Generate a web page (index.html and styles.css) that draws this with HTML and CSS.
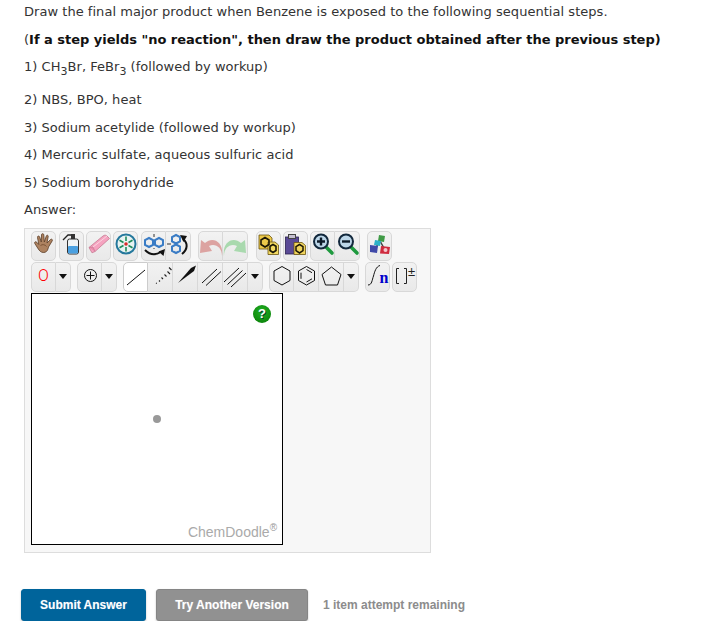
FILE: index.html
```html
<!DOCTYPE html>
<html lang="en">
<head>
    <meta charset="UTF-8">
    <meta name="viewport" content="width=device-width, initial-scale=1.0">
    <title>Question</title>
    <link rel="stylesheet" href="styles.css">
</head>
<body>
    <div class="question">
        <p>Draw the final major product when Benzene is exposed to the following sequential steps.</p>
        <p>(<strong>If a step yields "no reaction", then draw the product obtained after the previous step)</strong></p>
        <p class="has-sub">1) CH<sub>3</sub>Br, FeBr<sub>3</sub> (followed by workup)</p>
        <p>2) NBS, BPO, heat</p>
        <p>3) Sodium acetylide (followed by workup)</p>
        <p>4) Mercuric sulfate, aqueous sulfuric acid</p>
        <p>5) Sodium borohydride</p>
        <p>Answer:</p>
    </div>

    <!-- Sketcher panel -->
    <div class="sketcher">
        <div class="tool-row">
            <div class="tool-group">
                <button class="tool" title="Hand"><svg viewBox="0 0 25 30"><path d="M8 19 C6.500 17 5.500 15 3.800 12.500 C3 11 4.800 10 5.800 11.300 L7.800 13.500 L6.500 6.500 C6.200 4.800 8.200 4.500 8.700 6 L10.300 11 L10.500 3.800 C10.500 2.300 12.700 2.300 12.800 3.800 L13.300 11 L15.300 5 C15.800 3.600 17.500 4.200 17.200 5.600 L16 12 L19.500 8.500 C20.600 7.500 22 8.700 21.200 9.900 L17.500 16 C16.800 19 16.200 20.500 14 21.300 C11.500 22 9.500 21 8 19 Z" fill="#ad8260" stroke="#5c3d27" stroke-width=".8"/><path d="M9.500 14.500 C11.500 13 14 13.500 15.500 15.500" fill="none" stroke="#7b5335" stroke-width="1"/></svg></button>
            </div>
            <div class="tool-group gap-m">
                <button class="tool" title="Clear"><svg viewBox="0 0 25 30"><path d="M4 9 L9 4 H14" fill="none" stroke="#222" stroke-width="1.300"/><rect x="12" y="3" width="4" height="5" fill="#333"/><rect x="8.500" y="8" width="11" height="15" rx="2" fill="#eef3f5" stroke="#333" stroke-width="1"/><rect x="9" y="15" width="10" height="7.500" rx="1" fill="#4aa0e0"/></svg></button>
            </div>
            <div class="tool-group gap-s">
                <button class="tool" title="Erase"><svg viewBox="0 0 25 30"><path d="M3 16.500 L17 5 C18.500 3.800 20 4 21 5 L23.500 7.500 L9 20.500 L6 21.800 Z" fill="#f5a3c0" stroke="#c77a92" stroke-width=".8"/><path d="M3 16.500 L7 16 L9 20.500" fill="#e98bab" stroke="#c77a92" stroke-width=".7"/><path d="M7 16 L21 5" stroke="#fbd5e0" stroke-width="1" fill="none"/></svg></button>
            </div>
            <div class="tool-group gap-s">
                <button class="tool" title="Center"><svg viewBox="0 0 25 30"><circle cx="13" cy="13" r="9.500" fill="#e8f3f2" stroke="#24789c" stroke-width="2"/><circle cx="13" cy="13" r="1.800" fill="#d92b2b"/><g stroke="#1f8a5a" stroke-width="1.600"><path d="M13 5.500 V10"/><path d="M13 16 V20.500"/><path d="M6.500 9.200 L10.500 11.500"/><path d="M15.500 14.500 L19.500 16.800"/><path d="M19.500 9.200 L15.500 11.500"/><path d="M10.500 14.500 L6.500 16.800"/></g></svg></button>
            </div>
            <div class="tool-group gap-m">
                <button class="tool" title="Flip horizontal"><svg viewBox="0 0 25 30"><g fill="none" stroke="#3a7cc5" stroke-width="2"><path d="M8 7 L12 9.200 V13.800 L8 16 L4 13.800 V9.200 Z"/><path d="M18 7 L22 9.200 V13.800 L18 16 L14 13.800 V9.200 Z"/></g><path d="M13 3 V6 M13 17 V18" stroke="#333"/><path d="M4 19 C9 24 15 24 20 21" fill="none" stroke="#111" stroke-width="2"/><path d="M24 18 L22.500 25 L17.500 20.500 Z" fill="#111"/></svg></button>
                <button class="tool" title="Flip vertical"><svg viewBox="0 0 25 30"><g fill="none" stroke="#3a7cc5" stroke-width="2"><path d="M10 4 L14 6.200 V10.300 L10 12.500 L6 10.300 V6.200 Z"/><path d="M10 13.500 L14 15.700 V19.800 L10 22 L6 19.800 V15.700 Z"/></g><path d="M1 13 H5" stroke="#333"/><path d="M17 8 C22 12 22 18 16 23" fill="none" stroke="#111" stroke-width="2"/><path d="M14 4 L21 5 L17.500 11 Z" fill="#111"/></svg></button>
            </div>
            <div class="tool-group gap-w">
                <button class="tool" title="Undo"><svg viewBox="0 0 25 30"><path d="M24 25 C24 16 17 12 11 15 L14 20 L2 22 L3 9 L7 12 C15 5 26 11 24 25 Z" fill="#dca3a1"/></svg></button>
                <button class="tool" title="Redo"><svg viewBox="0 0 25 30"><path d="M1 25 C1 16 8 12 14 15 L11 20 L23 22 L22 9 L18 12 C10 5 -1 11 1 25 Z" fill="#a9d9ae"/></svg></button>
            </div>
            <div class="tool-group gap-xl">
                <button class="tool" title="Copy"><svg viewBox="0 0 25 30"><path d="M3 4 H13 L16 7 V18 H3 Z" fill="#ecc94a" stroke="#6a5410" stroke-width=".8"/><path d="M12 11 H19 L22.500 14 V23.500 H12 Z" fill="#f3da62" stroke="#6a5410" stroke-width=".8"/><g fill="none" stroke="#1d1805" stroke-width="1.600"><path d="M9 6.500 L13 9 V13.500 L9 16 L5 13.500 V9 Z"/><path d="M17 13.500 L20 15.300 V19.500 L17 21.500 L14 19.500 V15.300 Z"/></g></svg></button>
            </div>
            <div class="tool-group gap-s">
                <button class="tool" title="Paste"><svg viewBox="0 0 25 30"><rect x="2.500" y="6" width="13" height="17" fill="#5a4a96" stroke="#2b2250" stroke-width=".8"/><rect x="5.500" y="3.500" width="7" height="4" fill="#c5c0d0" stroke="#444"/><path d="M11 11.500 H19 L22.500 14.500 V23.500 H11 Z" fill="#f0d45c" stroke="#6a5410" stroke-width=".8"/><path d="M16.500 13.500 L20 15.700 V19.700 L16.500 22 L13 19.700 V15.700 Z" fill="none" stroke="#1d1805" stroke-width="1.500"/></svg></button>
            </div>
            <div class="tool-group gap-s">
                <button class="tool" title="Zoom in"><svg viewBox="0 0 25 30"><path d="M16 16 L22 22" stroke="#1f9a3f" stroke-width="3.600" stroke-linecap="round"/><circle cx="11" cy="10.500" r="7" fill="#bcd6e8" stroke="#12283c" stroke-width="2"/><path d="M7 10.500 H15 M11 6.500 V14.500" stroke="#0c1a28" stroke-width="2.400"/></svg></button>
                <button class="tool" title="Zoom out"><svg viewBox="0 0 25 30"><path d="M16 16 L22 22" stroke="#1f9a3f" stroke-width="3.600" stroke-linecap="round"/><circle cx="11" cy="10.500" r="7" fill="#bcd6e8" stroke="#12283c" stroke-width="2"/><path d="M7 10.500 H15" stroke="#0c1a28" stroke-width="2.400"/></svg></button>
            </div>
            <div class="tool-group gap-w">
                <button class="tool" title="Colors"><svg viewBox="0 0 25 30"><path d="M8 18 L13 10 L18 19" stroke="#444" stroke-width="1.500" fill="none"/><path d="M12 4 L18 5 L17 11 L11 10 Z" fill="#3f9a46"/><path d="M8 9 L14 10 L13 15 L7 14 Z" fill="#2bb0c8"/><path d="M3 14 L11 15 L10 22 L3 21 Z" fill="#3e48a8"/><path d="M14 15 L23 16 L22 23 L13 22.500 Z" fill="#cf2a3e"/><circle cx="18.500" cy="19" r="2" fill="#f3c4cc"/></svg></button>
            </div>
        </div>

        <div class="tool-row">
            <div class="tool-group">
                <button class="tool label-red" title="Label">O</button>
                <button class="tool tool-arrow" title="More"><span class="caret"></span></button>
            </div>
            <div class="tool-group gap-l">
                <button class="tool" title="Charge"><svg viewBox="0 0 25 30"><circle cx="13.500" cy="13.500" r="6" fill="none" stroke="#111" stroke-width="1"/><path d="M9.500 13.500 H17.500 M13.500 9.500 V17.500" stroke="#111" stroke-width="1"/></svg></button>
                <button class="tool tool-arrow" title="More"><span class="caret"></span></button>
            </div>
            <div class="tool-group gap-l">
                <button class="tool selected" title="Single bond"><svg viewBox="0 0 25 30"><path d="M4 23 L22 8" stroke="#111" stroke-width="1"/></svg></button>
                <button class="tool" title="Recessed bond"><svg viewBox="0 0 25 30"><path d="M8 21 L8.800 21.500 M11 18.500 L12 19.500 M13.500 15.500 L15 17 M16.500 12.500 L18.500 14.500 M19.500 9.500 L22 12 M21 5.500 L23.500 8" stroke="#222" stroke-width="1.100"/></svg></button>
                <button class="tool" title="Protruding bond"><svg viewBox="0 0 25 30"><path d="M5 21 L18 6 L23 3.500 L21 9 Z" fill="#111"/></svg></button>
                <button class="tool" title="Double bond"><svg viewBox="0 0 25 30"><path d="M4 21 L19 7 M8 23.500 L23 9.500" stroke="#111" stroke-width="1"/></svg></button>
                <button class="tool" title="Triple bond"><svg viewBox="0 0 25 30"><path d="M1 20 L16 6 M4.500 22.500 L19.500 8.500 M8 25 L23 11" stroke="#111" stroke-width="1"/></svg></button>
                <button class="tool tool-arrow" title="More"><span class="caret"></span></button>
            </div>
            <div class="tool-group gap-l">
                <button class="tool" title="Cyclohexane"><svg viewBox="0 0 25 30"><path d="M13 4.500 L21 9 V18.500 L13 23 L5 18.500 V9 Z" fill="none" stroke="#111" stroke-width="1"/></svg></button>
                <button class="tool" title="Benzene"><svg viewBox="0 0 25 30"><path d="M12.500 4.500 L20.500 9 V18.500 L12.500 23 L4.500 18.500 V9 Z" fill="none" stroke="#111" stroke-width="1"/><path d="M12.500 7.500 L18 10.700 M18 16.800 L12.500 20 M7 16.800 V10.700" stroke="#111" stroke-width="1"/></svg></button>
                <button class="tool" title="Cyclopentane"><svg viewBox="0 0 25 30"><path d="M12.500 5 L22 12.500 L18.500 23 H6.500 L3 12.500 Z" fill="none" stroke="#111" stroke-width="1"/></svg></button>
                <button class="tool tool-arrow" title="More"><span class="caret"></span></button>
            </div>
            <div class="tool-group gap-l">
                <button class="tool" title="Repeat unit"><svg viewBox="0 0 25 30"><path d="M3 23 C7 23 7 18 8.500 14 C9.500 10 11 4.500 15 3.500" fill="none" stroke="#111" stroke-width="1"/><text x="14.500" y="21" class="repeat-n">n</text></svg></button>
            </div>
            <div class="tool-group gap-s">
                <button class="tool" title="Brackets"><svg viewBox="0 0 25 30"><path d="M7 6.500 H4.500 V21.500 H7 M12 6.500 H14.500 V21.500 H12" fill="none" stroke="#222" stroke-width="1"/><text x="16" y="14" class="plus-minus">±</text></svg></button>
            </div>
        </div>

        <div class="canvas">
            <span class="help">?</span>
            <span class="dot"></span>
            <span class="brand">ChemDoodle<sup>®</sup></span>
        </div>
    </div>

    <div class="actions">
        <button class="btn btn-primary">Submit Answer</button>
        <button class="btn btn-grey">Try Another Version</button>
        <span class="attempts">1 item attempt remaining</span>
    </div>
</body>
</html>
```

FILE: styles.css
```css
body {
    margin: 0;
    padding: 4px 24px 0;
    background: #fff;
    color: #333;
    font-family: 'DejaVu Sans', Verdana, sans-serif;
    font-size: 13px;
}

/* Question text */
.question p {
    margin: 0 0 12px;
    line-height: 15.6px;
    letter-spacing: 0.034px;
}

.question strong {
    color: #111;
    letter-spacing: -0.02px;
}

.question sub {
    font-size: 11px;
}

.question .has-sub {
    margin-bottom: 12.6px;
}

/* Sketcher panel */
.sketcher {
    box-sizing: border-box;
    width: 407px;
    height: 325px;
    margin-top: -1.600px;
    padding: 2px 6px 0;
    background: #f7f7f7;
    border: 1px solid #ddd;
}

.tool-row {
    display: flex;
    height: 31px;
}

.tool-group {
    display: flex;
    height: 30px;
}

.gap-s { margin-left: 2px; }
.gap-m { margin-left: 3px; }
.gap-l { margin-left: 6px; }
.gap-w { margin-left: 7px; }
.gap-xl { margin-left: 8px; }

.tool {
    box-sizing: border-box;
    flex: none;
    width: 25px;
    height: 30px;
    padding: 0;
    background: linear-gradient(#f2f2f2, #e9e9e9);
    border: 1px solid #d8d8d8;
    border-left-width: 0;
    border-radius: 0;
}

.tool:first-child {
    border-left-width: 1px;
    border-radius: 5px 0 0 5px;
}

.tool:last-child {
    border-radius: 0 5px 5px 0;
}

.tool:only-child {
    border-radius: 5px;
}

.tool svg {
    display: block;
    width: 25px;
    height: 30px;
    margin: -1px;
}

.tool:not(:first-child) svg {
    margin-left: 0;
}

.tool.selected {
    background: #fff;
    border-color: #ccc;
}

.tool-arrow {
    width: 15px;
}

.caret {
    display: block;
    width: 0;
    margin: -2px auto 0;
    border-left: 4px solid transparent;
    border-right: 4px solid transparent;
    border-top: 5px solid #111;
}

.label-red {
    padding-bottom: 3px;
    color: #f00;
    font-family: Roboto, sans-serif;
    font-size: 16px;
    font-weight: 300;
}

.repeat-n {
    fill: #00c;
    font-family: 'Liberation Serif', serif;
    font-size: 16px;
    font-weight: 700;
}

.plus-minus {
    fill: #222;
    font-family: 'Liberation Sans', Arial, sans-serif;
    font-size: 13px;
}

/* Drawing area */
.canvas {
    box-sizing: border-box;
    position: relative;
    width: 252px;
    height: 252px;
    background: #fff;
    border: 1px solid #000;
}

.help {
    position: absolute;
    top: 11px;
    left: 221px;
    width: 18px;
    height: 18px;
    border-radius: 50%;
    background: radial-gradient(circle at 50% 35%, #22b022, #067a06);
    color: #fff;
    font-family: 'Liberation Sans', Arial, sans-serif;
    font-size: 13px;
    font-weight: 700;
    line-height: 18px;
    text-align: center;
    text-shadow: 1px 1px 0 #043;
}

.dot {
    position: absolute;
    top: 121px;
    left: 121px;
    width: 8px;
    height: 8px;
    border-radius: 50%;
    background: #999;
}

.brand {
    position: absolute;
    right: 5px;
    bottom: 4px;
    color: #aaa;
    font-family: 'Liberation Sans', Arial, sans-serif;
    font-size: 14px;
    line-height: 16px;
}

.brand sup {
    color: #999;
    font-size: 10px;
    line-height: 0;
}

/* Buttons under the panel */
.actions {
    display: flex;
    align-items: center;
    margin: 36px 0 0 -3px;
    font-family: 'Liberation Sans', Arial, sans-serif;
    font-size: 12px;
    font-weight: 700;
}

.btn {
    height: 32px;
    padding: 0;
    border-radius: 3px;
    color: #fff;
    font: inherit;
    box-shadow: 0 1px 2px rgba(0, 0, 0, 0.25);
    text-shadow: 0 0 1px rgba(255, 255, 255, 0.35);
}

.btn-primary {
    width: 125px;
    background: #00649b;
    border: 1px solid #00649b;
}

.btn-grey {
    width: 152px;
    margin-left: 10px;
    background: #919191;
    border: 1px solid #858585;
}

.attempts {
    margin-left: 15px;
    color: #8c8c8c;
}
```
